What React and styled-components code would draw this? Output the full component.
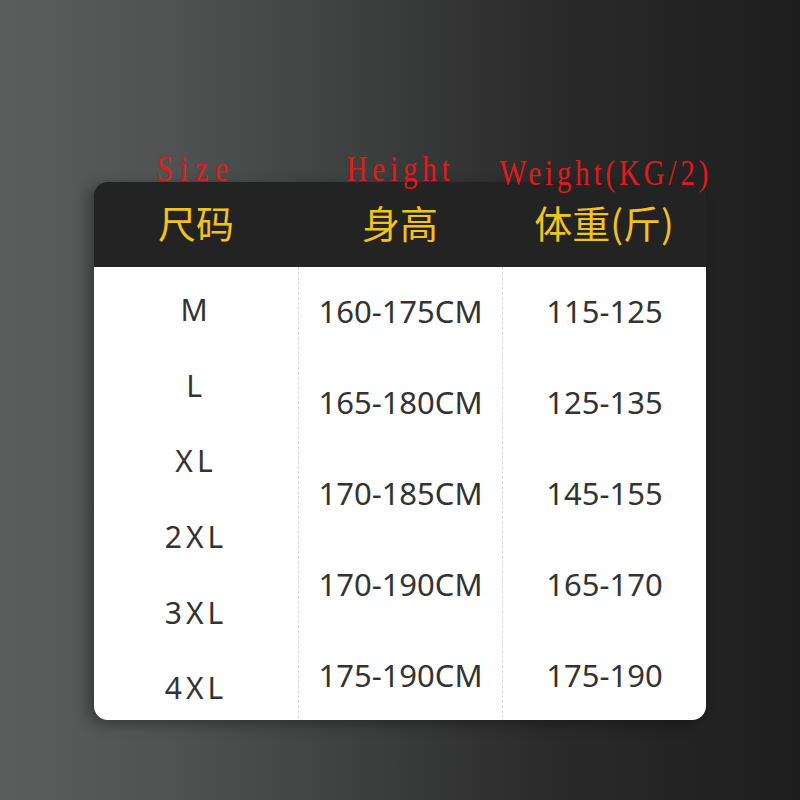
import React from "react";
import styled, { createGlobalStyle } from "styled-components";

const Global = createGlobalStyle`
  html, body { margin: 0; padding: 0; }
  body {
    width: 800px;
    height: 800px;
    overflow: hidden;
    font-family: "Noto Sans", "Noto Sans CJK SC", sans-serif;
  }
`;

const Page = styled.div`
  width: 800px;
  height: 800px;
  box-sizing: border-box;
  padding: 156px 94px 0 94px;
  background: linear-gradient(90deg, #5c5e5d 0%, #505251 22%, #3e3f3f 45%, #2b2b2b 68%, #1d1d1d 100%);
`;

const Grid3 = styled.div`
  display: grid;
  grid-template-columns: repeat(3, minmax(0, 1fr));
`;

const LabelRow = styled(Grid3)`
  height: 26px;
`;

const LabelCell = styled.div`
  display: flex;
  justify-content: center;
  margin-top: ${(p) => p.$drop || 0}px;
  padding-left: ${(p) => p.$nudge || 0}px;
`;

const Label = styled.span`
  display: inline-block;
  flex-shrink: 0;
  font-family: "Liberation Serif", "DejaVu Serif", serif;
  font-size: 36px;
  line-height: 26px;
  letter-spacing: ${(p) => p.$ls}px;
  color: #e41a1a;
  white-space: nowrap;
  transform: scaleX(0.8);
`;

const Card = styled.div`
  width: 612px;
  border-radius: 14px;
  overflow: hidden;
  box-shadow: -6px 4px 14px rgba(0, 0, 0, 0.35);
`;

const Header = styled(Grid3)`
  box-sizing: border-box;
  height: 85px;
  padding-bottom: 5px;
  background: #232323;
  align-items: center;
`;

const HeadCell = styled.div`
  text-align: center;
  font-family: "Noto Sans CJK SC", sans-serif;
  font-size: 38px;
  color: #f4c21d;
  line-height: 1;
`;

const Body = styled(Grid3)`
  height: 453px;
  background: #ffffff;
`;

const Column = styled.div`
  display: flex;
  flex-direction: column;
  align-items: center;
  padding-top: ${(p) => p.$pad}px;
  border-left: ${(p) => (p.$first ? "none" : "1px dashed #d9d9d9")};
`;

const Cell = styled.div`
  box-sizing: border-box;
  height: ${(p) => p.$h}px;
  padding-bottom: 4px;
  display: flex;
  align-items: center;
  justify-content: center;
  font-family: "Noto Sans", "Noto Sans CJK SC", sans-serif;
  font-size: ${(p) => p.$fs}px;
  letter-spacing: ${(p) => p.$ls || 0}px;
  color: #333333;
  white-space: nowrap;
`;

const sizes = ["M", "L", "XL", "2XL", "3XL", "4XL"];
const heights = ["160-175CM", "165-180CM", "170-185CM", "170-190CM", "175-190CM"];
const weights = ["115-125", "125-135", "145-155", "165-170", "175-190"];

const labels = [
  { text: "Size", ls: 9, drop: 0, nudge: 0 },
  { text: "Height", ls: 6.2, drop: 0, nudge: 1 },
  { text: "Weight(KG/2)", ls: 4.9, drop: 4, nudge: 4 },
];

export default function App() {
  return (
    <>
      <Global />
      <Page>
        <LabelRow>
          {labels.map((l) => (
            <LabelCell key={l.text} $drop={l.drop} $nudge={l.nudge}>
              <Label $ls={l.ls}>{l.text}</Label>
            </LabelCell>
          ))}
        </LabelRow>
        <Card>
          <Header>
            <HeadCell>尺码</HeadCell>
            <HeadCell>身高</HeadCell>
            <HeadCell>体重(斤)</HeadCell>
          </Header>
          <Body>
            <Column $first $pad={7}>
              {sizes.map((s) => (
                <Cell key={s} $h={75.6} $fs={30} $ls={4}>{s}</Cell>
              ))}
            </Column>
            <Column $pad={0}>
              {heights.map((s) => (
                <Cell key={s} $h={91} $fs={31}>{s}</Cell>
              ))}
            </Column>
            <Column $pad={0}>
              {weights.map((s) => (
                <Cell key={s} $h={91} $fs={31}>{s}</Cell>
              ))}
            </Column>
          </Body>
        </Card>
      </Page>
    </>
  );
}
